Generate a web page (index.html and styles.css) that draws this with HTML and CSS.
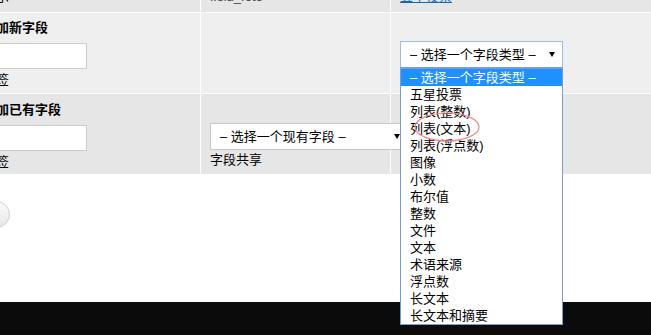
FILE: index.html
```html
<!DOCTYPE html>
<html lang="zh-CN">
<head>
    <meta charset="UTF-8">
    <meta name="viewport" content="width=device-width, initial-scale=1.0">
    <title>管理字段</title>
    <link rel="stylesheet" href="styles.css">
</head>
<body>
    <div class="page">
        <div class="fields">
            <!-- existing field row (scrolled, mostly hidden) -->
            <div class="cell cell-top"><span>显示</span></div>
            <div class="cell cell-top"><span class="machine">field_foto</span></div>
            <div class="cell cell-top"><a href="#" class="type-link">五星投票</a></div>

            <!-- add new field -->
            <div class="cell cell-label cell-new">
                <h3>添加新字段</h3>
                <input class="text-input" type="text">
                <div class="desc">标签</div>
            </div>
            <div class="cell cell-new"></div>
            <div class="cell cell-new cell-type">
                <div class="select focused">
                    <span>– 选择一个字段类型 –</span>
                    <i class="arrow"></i>
                </div>
                <ul class="options">
                    <li class="active">– 选择一个字段类型 –</li>
                    <li>五星投票</li>
                    <li>列表(整数)</li>
                    <li>列表(文本)</li>
                    <li>列表(浮点数)</li>
                    <li>图像</li>
                    <li>小数</li>
                    <li>布尔值</li>
                    <li>整数</li>
                    <li>文件</li>
                    <li>文本</li>
                    <li>术语来源</li>
                    <li>浮点数</li>
                    <li>长文本</li>
                    <li>长文本和摘要</li>
                </ul>
                <svg class="mark" width="68" height="32" viewBox="0 0 68 32">
                    <ellipse cx="34" cy="16" rx="32" ry="14" fill="none" stroke="#ee8a8a" stroke-width="1.2"/>
                </svg>
            </div>

            <!-- add existing field -->
            <div class="cell cell-label cell-existing">
                <h3>添加已有字段</h3>
                <input class="text-input" type="text">
                <div class="desc">标签</div>
            </div>
            <div class="cell cell-existing cell-share">
                <div class="select wide">
                    <span>– 选择一个现有字段 –</span>
                    <i class="arrow"></i>
                </div>
                <div class="desc">字段共享</div>
            </div>
            <div class="cell cell-existing"></div>
        </div>

        <div class="round-btn"></div>

        <div class="footer"></div>
    </div>
</body>
</html>
```

FILE: styles.css
```css
html, body {
    margin: 0;
    overflow: hidden;
}

body {
    background: #ffffff;
    color: #000;
    font-family: "Liberation Sans", "Noto Sans CJK SC", sans-serif;
    font-size: 13px;
    line-height: 17px;
}

.page {
    margin-left: -27px;
    width: 678px;
}

.fields {
    display: grid;
    grid-template-columns: 227px 189px 1fr;
    grid-template-rows: 42px 80px 80px;
    gap: 1px;
    margin-top: -30px;
    background: #ffffff;
}

.cell {
    background: #e6e6e6;
    padding-left: 9px;
    box-sizing: border-box;
}

.cell:nth-child(3n+1) {
    padding-left: 10px;
}

.cell-top {
    padding-top: 18px;
}

.machine {
    color: #444;
}

.type-link {
    color: #0f6ab4;
    text-decoration: underline;
}

.cell-new {
    background: #efefef;
}

.cell-label {
    padding-top: 6px;
}

.cell-existing.cell-label {
    padding-top: 7px;
}

.cell-label h3 {
    margin: 0;
    font-size: 13px;
    font-weight: bold;
    line-height: 17px;
}

.text-input {
    display: block;
    box-sizing: border-box;
    width: 104px;
    height: 26px;
    margin: 7px 0 2px;
    border: 1px solid #cccccc;
    background: #fff;
    padding: 0 4px;
}

.desc {
    height: 17px;
}

.cell-type {
    position: relative;
    padding-top: 28px;
}

.cell-share {
    padding-top: 29px;
}

.select {
    display: flex;
    align-items: center;
    justify-content: space-between;
    box-sizing: border-box;
    width: 163px;
    height: 27px;
    padding: 0 7px 0 9px;
    border: 1px solid #c8c8c8;
    background: #ffffff;
}

.select.focused {
    border-color: #9dbbe6;
    border-bottom-color: #7a9cd3;
}

/* reaches past the column edge, under the open list */
.select.wide {
    position: relative;
    z-index: 1;
    width: 198px;
    height: 27px;
    margin-bottom: 1px;
}

.arrow {
    width: 0;
    height: 0;
    border-left: 3px solid transparent;
    border-right: 3px solid transparent;
    border-top: 5px solid #000;
}

.options {
    position: absolute;
    left: 9px;
    top: 55px;
    z-index: 2;
    width: 163px;
    box-sizing: border-box;
    margin: 0;
    padding: 0;
    list-style: none;
    border: 1px solid #7a9cd3;
    background: #ffffff;
}

.options li {
    height: 17px;
    padding-left: 9px;
    white-space: nowrap;
}

.options li.active {
    background: #1e90ff;
    color: #ffffff;
}

.mark {
    position: absolute;
    left: 22px;
    top: 98px;
    z-index: 3;
}

.round-btn {
    width: 27px;
    height: 27px;
    margin: 27px 0 0 10px;
    box-sizing: border-box;
    border: 1px solid #cfcfcf;
    border-radius: 50%;
    background: linear-gradient(#fbfbfb, #e6e6e6);
}

.footer {
    height: 40px;
    margin-top: 74px;
    background: #0b0b0b;
}
```
